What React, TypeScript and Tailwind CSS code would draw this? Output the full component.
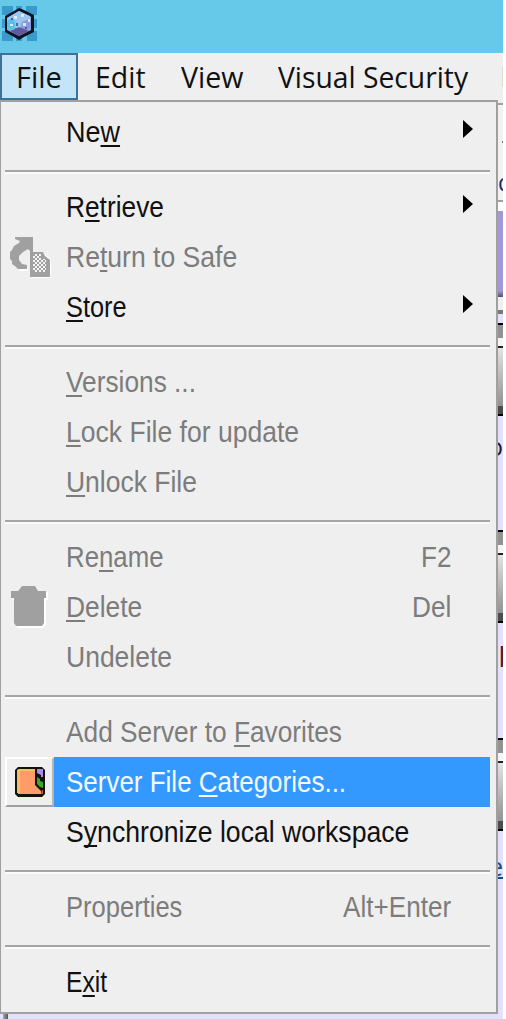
import { useLayoutEffect, useRef } from "react";
import type { ReactNode } from "react";

/** Condenses a run of text horizontally to the given width. */
function Fit({ width, children }: { width: number; children: ReactNode }) {
  const ref = useRef<HTMLSpanElement>(null);
  useLayoutEffect(() => {
    const el = ref.current;
    if (el) el.style.transform = `scaleX(${width / el.offsetWidth})`;
  }, [width]);
  return (
    <span className="block overflow-visible" style={{ width }}>
      <span ref={ref} className="inline-block origin-left whitespace-nowrap">
        {children}
      </span>
    </span>
  );
}

function SafeIcon() {
  return (
    <svg width="42" height="42" viewBox="0 0 42 42">
      <defs>
        <pattern id="dots" width="4" height="4" patternUnits="userSpaceOnUse">
          <rect width="2" height="2" fill="#f4f4f4" />
          <rect x="2" y="2" width="2" height="2" fill="#f4f4f4" />
        </pattern>
      </defs>
      <path d="M23 17H35L42 24V42H23Z" fill="#fff" />
      <path d="M11 30L19 32V35H10Z" fill="#fff" />
      <path d="M6 1H24V17H21V15L19 13L14 16L10 20L10 24L13 28L18 29V33H9L6 30L3 28V25L1 23V16L3 14L5 10L10 7L11 5L6 3Z" fill="#a0a0a0" />
      <path d="M21 16H34L36 20L41 24V41H21Z" fill="#a0a0a0" />
      <path d="M24 18H32V22L37 24V36H24Z" fill="url(#dots)" shapeRendering="crispEdges" />
    </svg>
  );
}

function TrashIcon() {
  return (
    <svg width="38" height="42" viewBox="0 0 38 42">
      <path d="M10 5L13 2H24L28 6H37V14H35V39L32 42H7L4 39V14H2V7H9Z" fill="#fff" />
      <path d="M8 4L11 0H24L27 5H35V12H33V37L31 40H5L3 37V12H0V5H7Z" fill="#a0a0a0" />
    </svg>
  );
}

function BookIcon() {
  return (
    <svg width="30" height="30" viewBox="0 0 30 30">
      <path d="M3 0H27L30 3V27L27 30H3L0 27V3Z" fill="#111" />
      <path d="M3 2H20V18L26 24V27H3Z" fill="#ff9c6a" />
      <path d="M2 3L4 2H20V4H5V26H2Z" fill="#eec45b" />
      <path d="M22 2H28V10H26V8L22 6Z" fill="#a78bf2" />
      <path d="M22 10L25 12V14L28 15V21L25 20L22 17Z" fill="#39aa22" />
      <path d="M27 23H28V27H26Z" fill="#d55825" />
    </svg>
  );
}

function AppIcon() {
  return (
    <svg width="35" height="35" viewBox="0 0 35 35">
      <path d="M0 0H11V9H0ZM14 0H20V6H14ZM24 0H35V9H24ZM0 13H9V22H0ZM0 25H11V35H0ZM14 27H20V35H14ZM25 25H35V35H25ZM28 13H35V22H28Z" fill="#399bcc" />
      <path d="M17 2L22 4L32 9V26L22 31L17 34L12 31L3 26V10L12 5Z" fill="#101522" />
      <path d="M17 5L29 11V24L17 30L5 24V12Z" fill="#8faee8" />
      <path d="M17 5L28 10L29 13L20 17L17 24L10 24L5 20V12Z" fill="#9cc6f1" />
      <path d="M5 15L10 12L13 15V22L9 24L5 21Z" fill="#53c3ee" />
      <path d="M20 16L29 12V22L24 25L19 24Z" fill="#8c99dc" />
      <path d="M8 25L13 23L17 21L22 23L27 25L17 30Z" fill="#62589a" />
      <path d="M12 10h3v3h-3zM19 8h3v3h-3zM8 18h3v2H8zM21 17h3v3h-3zM26 13h2v3h-2z" fill="#dcebff" />
      <path d="M9 12h2v2H9zM14 17h2v3h-2zM13 22h2v2h-2zM23 21h2v2h-2z" fill="#4467b2" />
    </svg>
  );
}

const Separator = () => (
  <div className="h-[25px] pt-[13px] pl-1 pr-[6px]">
    <div className="h-[4px] border-t-2 border-t-[#a5a5a5] bg-[#fbfbfb]" />
  </div>
);

const K = ({ children }: { children: ReactNode }) => (
  <span className="underline decoration-[2px] underline-offset-[3px] [text-decoration-skip-ink:none]">{children}</span>
);

type ItemProps = {
  children: ReactNode;
  width: number;
  off?: boolean;
  active?: boolean;
  arrow?: boolean;
  icon?: ReactNode;
  hotkey?: string;
  hotkeyWidth?: number;
};

function Item({ children, width, off, active, arrow, icon, hotkey, hotkeyWidth = 0 }: ItemProps) {
  const tone = active ? "bg-[#3399ff] text-[#f4faff]" : off ? "text-[#7c7c7c]" : "text-[#111]";
  return (
    <div className="flex h-[50px] pl-1 pr-[6px]">
      <div
        className={
          active
            ? "flex w-[49px] shrink-0 items-center justify-center border-2 border-t-white border-l-white border-b-[#a0a0a0] border-r-[#b5b5b5]"
            : "flex w-[49px] shrink-0 items-center justify-center"
        }
      >
        {icon}
      </div>
      <div className={`flex grow items-center justify-between pl-[12px] text-[29.5px] leading-[50px] ${tone}`}>
        <Fit width={width}>{children}</Fit>
        {hotkey && (
          <div className="pr-[39px]">
            <Fit width={hotkeyWidth}>{hotkey}</Fit>
          </div>
        )}
        {arrow && (
          <svg className="mr-[17px] -mt-[7px]" width="10" height="18" viewBox="0 0 10 18">
            <path d="M0 0L10 9L0 18Z" fill="#000" />
          </svg>
        )}
      </div>
    </div>
  );
}

function Thumb() {
  return (
    <div className="shrink-0">
      <div className="h-[2px] bg-black" />
      <div className="h-[13px] bg-[#929292]" />
      <div className="h-[8px] bg-[#f5f5f5]" />
      <div className="h-[2px] bg-[#222]" />
      <div className="h-[58px] bg-linear-to-b from-[#e4e4e4] to-[#929292]" />
      <div className="h-[8px] bg-[#4b4b4b]" />
      <div className="h-[2px] bg-black" />
    </div>
  );
}

function Backdrop() {
  return (
    <div className="flex w-[5px] shrink-0 flex-col overflow-hidden bg-[#e3e1fc] font-['Open_Sans',sans-serif] text-[25px]">
      <div className="h-[3px] shrink-0 bg-[#efefef]" />
      <div className="h-[2px] shrink-0 bg-[#a0a0a0]" />
      <div className="h-[65px] shrink-0 bg-[#f2f2f2] pt-[36px]">
        <div className="ml-[4px] h-[2px] bg-[#777]" />
      </div>
      <div className="h-[30px] shrink-0 bg-[#f2f2f2] text-[23px] leading-[24px] text-[#182b66]">d</div>
      <div className="h-[2px] shrink-0 bg-[#a0a0a0]" />
      <div className="h-[9px] shrink-0 bg-white" />
      <div className="h-[80px] shrink-0 bg-[#a397d7]" />
      <div className="h-[6px] shrink-0 bg-linear-to-b from-[#a397d7] to-[#555064]" />
      <div className="h-[13px] shrink-0 bg-[#efefef]" />
      <div className="h-[4px] shrink-0 bg-[#777]" />
      <div className="h-[9px] shrink-0 bg-[#e3e1fc]" />
      <Thumb />
      <div className="flex h-[114px] shrink-0 justify-end pt-[17px] leading-[26px] text-[#251b30]">o</div>
      <Thumb />
      <div className="h-[115px] shrink-0 pt-[20px] text-[29px] leading-[26px] text-[#641330]">P</div>
      <Thumb />
      <div className="flex shrink-0 justify-end pt-[22px] leading-[26px] text-[#164a8a] underline decoration-2">e</div>
    </div>
  );
}

export default function App() {
  return (
    <div className="h-[1019px] w-[506px] overflow-hidden bg-white font-['Liberation_Sans',Arial,sans-serif]">
      <div className="h-[1019px] w-[503px] overflow-hidden bg-[#e3e1fc]">
        <header className="h-[53px] bg-[#66c9e9] pt-[6px] pl-[2px]">
          <AppIcon />
        </header>
        <nav className="flex h-[47px] bg-[#efefef] font-['Open_Sans',sans-serif] text-[29px] leading-[47px] text-[#111]">
          <div className="h-[47px] w-[78px] shrink-0 border-2 border-[#3d7195] bg-[#c3e5f7] pl-[14px] leading-[43px]">
            <Fit width={46}>File</Fit>
          </div>
          <div className="w-[101px] shrink-0 pl-[17px]"><Fit width={51}>Edit</Fit></div>
          <div className="w-[98px] shrink-0 pl-[2px]"><Fit width={62}>View</Fit></div>
          <div className="w-[225px] shrink-0 pl-px"><Fit width={190}>Visual Security</Fit></div>
          <div className="h-[20px] w-px self-center bg-[#ead8c5]" />
        </nav>
        <div className="flex h-[914px]">
          <main className="w-[498px] shrink-0 border-t-2 border-r-2 border-b-2 border-l border-[#a0a0a0] bg-[#efefef] pt-[5px]">
            <Item width={54} arrow>Ne<K>w</K></Item>
            <Separator />
            <Item width={98} arrow>R<K>e</K>trieve</Item>
            <Item width={171} off icon={<SafeIcon />}>Re<K>t</K>urn to Safe</Item>
            <Item width={61} arrow><K>S</K>tore</Item>
            <Separator />
            <Item width={130} off><K>V</K>ersions ...</Item>
            <Item width={233} off><K>L</K>ock File for update</Item>
            <Item width={131} off><K>U</K>nlock File</Item>
            <Separator />
            <Item width={98} off hotkey="F2" hotkeyWidth={30}>Re<K>n</K>ame</Item>
            <Item width={76} off icon={<TrashIcon />} hotkey="Del" hotkeyWidth={39}><K>D</K>elete</Item>
            <Item width={106} off>Undelete</Item>
            <Separator />
            <Item width={276} off>Add Server to <K>F</K>avorites</Item>
            <Item width={280} active icon={<BookIcon />}>Server File <K>C</K>ategories...</Item>
            <Item width={343}>S<K>y</K>nchronize local workspace</Item>
            <Separator />
            <Item width={116} off hotkey="Alt+Enter" hotkeyWidth={108}>Properties</Item>
            <Separator />
            <Item width={41}>E<K>x</K>it</Item>
          </main>
          <Backdrop />
        </div>
        <div className="flex h-[5px] pl-[3px]">
          <div className="w-[5px] bg-linear-to-r from-[#aaa] to-[#555]" />
        </div>
      </div>
    </div>
  );
}
